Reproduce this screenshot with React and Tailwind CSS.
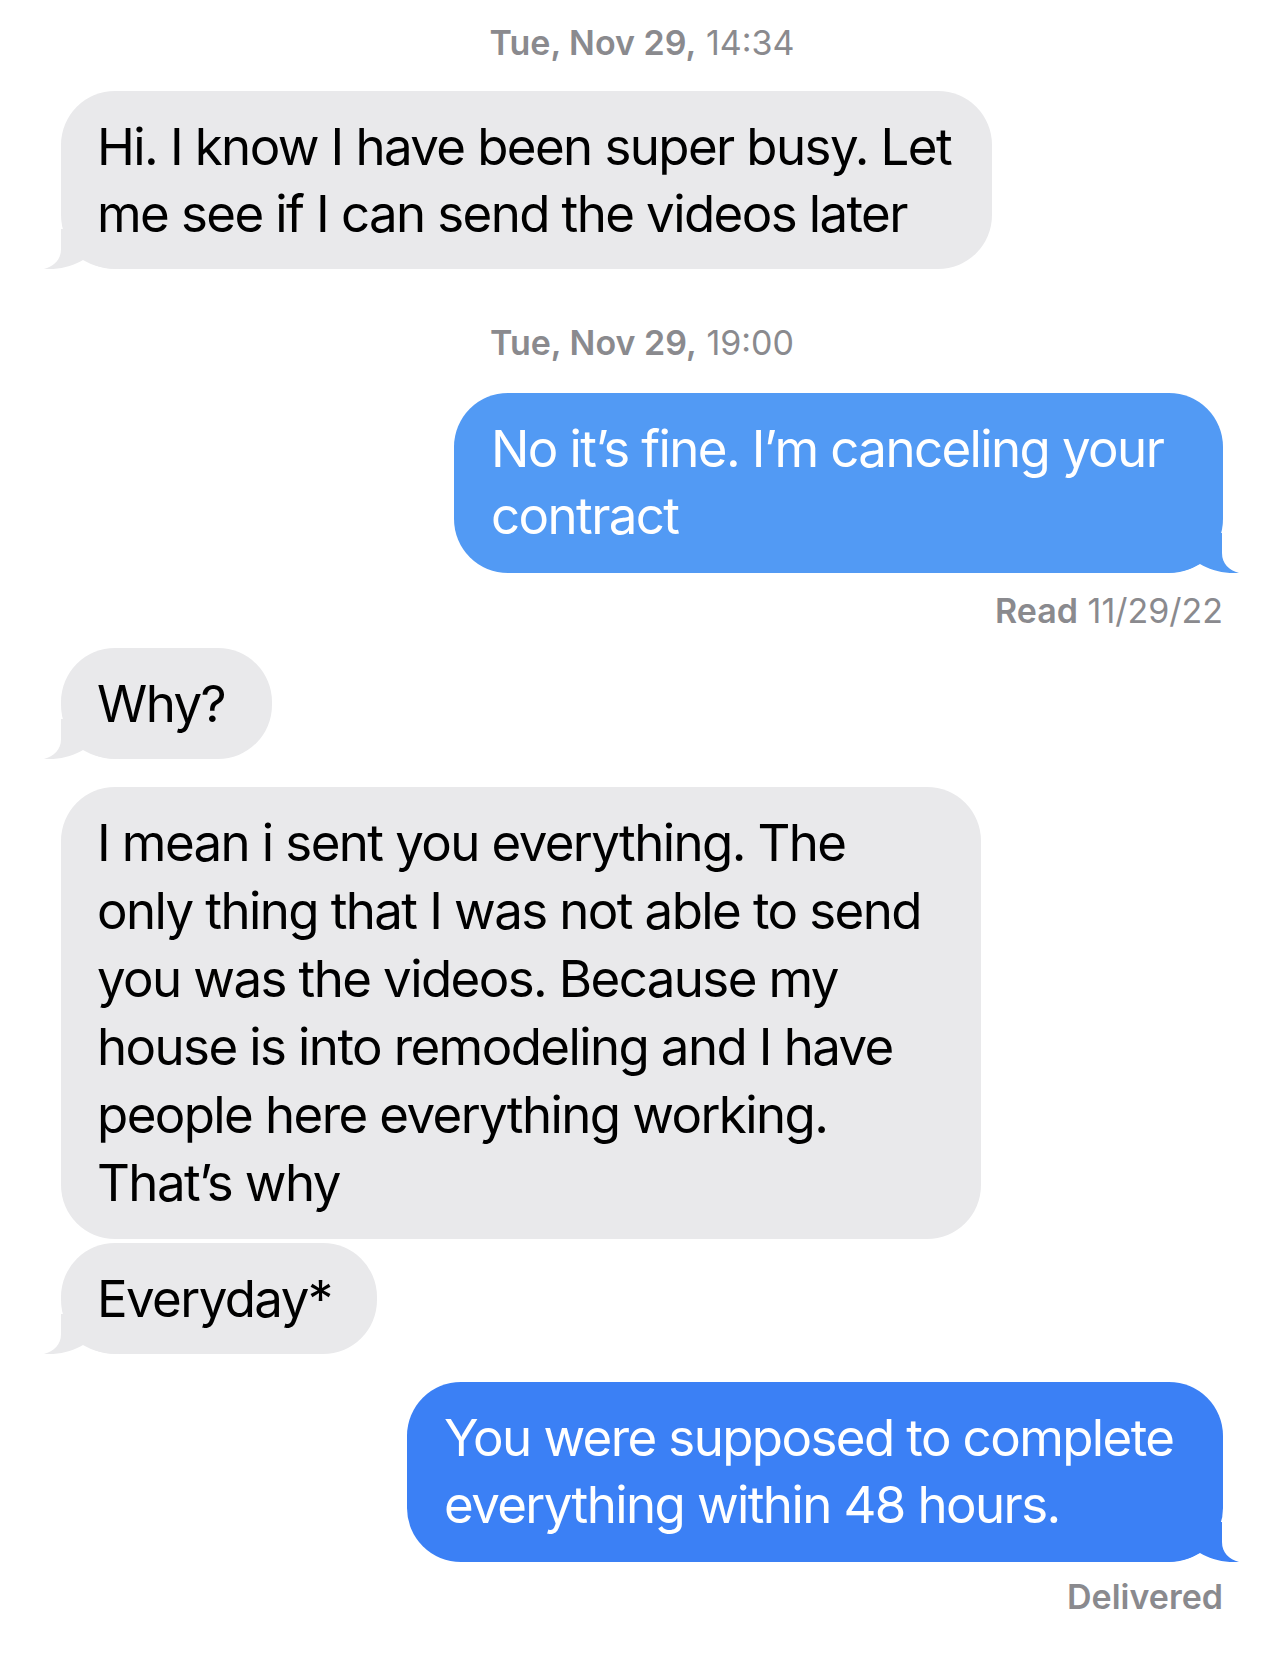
import React from 'react';

// bubble tail, drawn for the left side; mirrored for sent messages
const Tail = ({ side, color }) => (
  <svg
    viewBox="0 0 80 40"
    className={`absolute bottom-0 w-[80px] h-[40px] ${side === 'left' ? 'left-[-18px]' : 'right-[-17px] -scale-x-100'} ${color}`}
    fill="currentColor"
  >
    <path d="M18 0 L18 20 C18 31 11 37 1 40 C16 41 30 37 40 31 C50 37 62 40 80 40 L80 0 Z" />
  </svg>
);

const Stamp = ({ day, time, className }) => (
  <div className={`text-center text-[34px] leading-[40px] text-[#8a8a8e] ${className}`}>
    <span className="font-semibold">{day}</span> {time}
  </div>
);

const Lines = ({ lines, lh = 'leading-[67px]' }) => (
  <p className={`relative text-[51px] ${lh} tracking-[-1.6px] whitespace-nowrap`}>
    {lines.map((l, i) => (
      <React.Fragment key={i}>
        {l}
        {i < lines.length - 1 && <br />}
      </React.Fragment>
    ))}
  </p>
);

const Received = ({ lines, width, tail, className, lh }) => (
  <div className={`flex justify-start ${className}`}>
    <div className={`relative rounded-[54px] bg-[#e9e9eb] text-black pl-[36px] py-[22px] ${width}`}>
      {tail && <Tail side="left" color="text-[#e9e9eb]" />}
      <Lines lines={lines} lh={lh} />
    </div>
  </div>
);

const Sent = ({ lines, width, bg, tailColor, className }) => (
  <div className={`flex justify-end ${className}`}>
    <div className={`relative rounded-[54px] text-white pl-[37px] pt-[22px] pb-[24px] ${bg} ${width}`}>
      <Tail side="right" color={tailColor} />
      <Lines lines={lines} />
    </div>
  </div>
);

export default function App() {
  return (
    <div
      className="w-[1284px] h-[1654px] bg-white px-[61px] pt-[23px]"
      style={{ fontFamily: 'Inter, "Noto Sans", "Liberation Sans", sans-serif' }}
    >
      <Stamp day="Tue, Nov 29," time="14:34" />

      <Received
        className="mt-[28px]"
        width="w-[931px]"
        tail
        lines={['Hi. I know I have been super busy. Let', 'me see if I can send the videos later']}
      />

      <Stamp day="Tue, Nov 29," time="19:00" className="mt-[54px]" />

      <Sent
        className="mt-[30px]"
        width="w-[769px]"
        bg="bg-[#529af4]"
        tailColor="text-[#529af4]"
        lines={['No it’s fine. I’m canceling your', 'contract']}
      />

      <div className="mt-[18px] text-right text-[34px] leading-[40px] text-[#8a8a8e]">
        <span className="font-semibold">Read</span> 11/29/22
      </div>

      <Received className="mt-[17px]" width="w-[211px]" tail lines={['Why?']} />

      <Received
        className="mt-[28px]"
        width="w-[920px]"
        lh="leading-[68px]"
        lines={[
          'I mean i sent you everything. The',
          'only thing that I was not able to send',
          'you was the videos. Because my',
          'house is into remodeling and I have',
          'people here everything working.',
          'That’s why',
        ]}
      />

      <Received className="mt-[4px]" width="w-[316px]" tail lines={['Everyday*']} />

      <Sent
        className="mt-[28px]"
        width="w-[816px]"
        bg="bg-[#3b80f5]"
        tailColor="text-[#3b80f5]"
        lines={['You were supposed to complete', 'everything within 48 hours.']}
      />

      <div className="mt-[15px] text-right text-[34px] leading-[40px] text-[#8a8a8e] font-semibold">
        Delivered
      </div>
    </div>
  );
}
